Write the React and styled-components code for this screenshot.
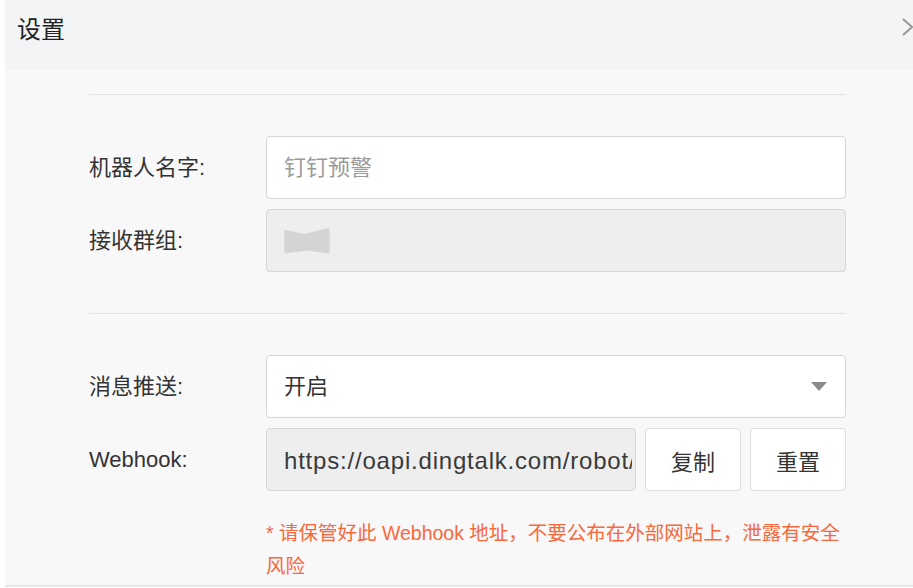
import styled, { createGlobalStyle } from "styled-components";

const Global = createGlobalStyle`
  html, body {
    margin: 0;
    background: #fff;
    overflow: hidden;
  }
  body {
    font-family: "Liberation Sans", "Noto Sans CJK SC", sans-serif;
    color: #333;
  }
`;

const Page = styled.div`
  padding-left: 5px;
  width: 930px;
`;

const Panel = styled.div`
  width: 925px;
  border-bottom: 2px solid #e6e6e6;
`;

const Header = styled.div`
  height: 70px;
  background: #f3f4f6;
  display: flex;
  align-items: center;
  justify-content: space-between;
  padding: 0 10px 16px 12px;
  box-sizing: border-box;
`;

const Title = styled.h2`
  margin: 0;
  font-size: 24px;
  font-weight: 400;
  color: #222;
  font-family: "Noto Sans CJK SC", sans-serif;
`;

const Close = styled.svg`
  width: 14px;
  height: 20px;
  margin-right: 5px;
`;

const Body = styled.div`
  background: #f8f8f8;
  padding: 24px 84px 2px 84px;
`;

const Divider = styled.div`
  height: 1px;
  background: #e3e3e3;
  margin-bottom: 41px;
`;

const Group = styled.div`
  display: flex;
  flex-direction: column;
  gap: 10px;
  margin-bottom: 41px;
`;

const Row = styled.div`
  display: flex;
  align-items: center;
  height: 63px;
`;

const Label = styled.div`
  width: 177px;
  flex-shrink: 0;
  font-size: 22px;
  color: #333;
  padding-bottom: ${(p) => (p.$latin ? "0" : "5px")};
`;

const Field = styled.div`
  flex: 1;
  min-width: 0;
  height: 100%;
  box-sizing: border-box;
  border: 1px solid #d6d6d6;
  border-radius: 4px;
  background: ${(p) => (p.$disabled ? "#eeeeee" : "#fff")};
  color: ${(p) => (p.$placeholder ? "#9a9a9a" : "#333")};
  font-size: 22px;
  padding: ${(p) => (p.$latin ? "0 3px 0 17px" : "0 16px 5px 17px")};
  display: flex;
  align-items: center;
  justify-content: space-between;
  white-space: nowrap;
  overflow: hidden;
`;

const Clip = styled.span`
  overflow: hidden;
  white-space: nowrap;
  display: block;
  font-size: 24px;
  letter-spacing: 0.8px;
  margin-top: 3px;
  color: #3a3a3a;
`;

const Blur = styled.span`
  display: block;
  width: 46px;
  height: 26px;
  margin-top: 5px;
  background: #d4d4d4;
  filter: blur(0.8px);
  clip-path: polygon(0 8%, 45% 25%, 100% 0, 100% 100%, 50% 88%, 0 100%);
`;

const Caret = styled.span`
  width: 0;
  height: 0;
  border-left: 8px solid transparent;
  border-right: 8px solid transparent;
  border-top: 9px solid #8a8a8a;
  margin: 5px 2px 0 0;
`;

const Button = styled.button`
  width: 96px;
  height: 100%;
  margin-left: 9px;
  flex-shrink: 0;
  background: #fff;
  border: 1px solid #dedede;
  border-radius: 4px;
  font-size: 22px;
  color: #333;
  font-family: "Noto Sans CJK SC", sans-serif;
  padding: 0;
`;

const Warning = styled.p`
  margin: -15px 0 0 177px;
  color: #f7683c;
  font-size: 19.5px;
  line-height: 33px;
  padding-right: 4px;
`;

export default function App() {
  return (
    <Page>
      <Global />
      <Panel>
        <Header>
          <Title>设置</Title>
          <Close viewBox="0 0 14 20">
            <polyline points="2,2 11,10 2,18" fill="none" stroke="#999" strokeWidth="2" />
          </Close>
        </Header>
        <Body>
          <Divider />
          <Group>
            <Row>
              <Label>机器人名字:</Label>
              <Field $placeholder>钉钉预警</Field>
            </Row>
            <Row>
              <Label>接收群组:</Label>
              <Field $disabled>
                <Blur />
              </Field>
            </Row>
          </Group>
          <Divider />
          <Group>
            <Row>
              <Label>消息推送:</Label>
              <Field>
                开启
                <Caret />
              </Field>
            </Row>
            <Row>
              <Label $latin>Webhook:</Label>
              <Field $disabled $latin>
                <Clip>https://oapi.dingtalk.com/robot/send?access_token=</Clip>
              </Field>
              <Button>复制</Button>
              <Button>重置</Button>
            </Row>
          </Group>
          <Warning>
            * 请保管好此 Webhook 地址，不要公布在外部网站上，泄露有安全风险
          </Warning>
        </Body>
      </Panel>
    </Page>
  );
}
